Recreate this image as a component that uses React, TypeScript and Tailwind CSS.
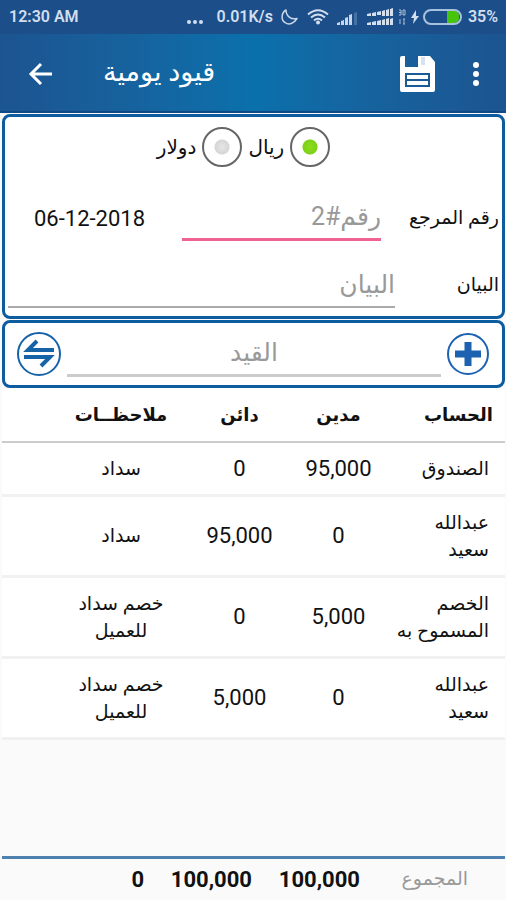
import { useState } from "react";

const entries = [
  { account: "الصندوق", debit: "95,000", credit: "0", note: "سداد", height: "h-[53px]" },
  { account: "عبدالله سعيد", debit: "0", credit: "95,000", note: "سداد", height: "h-[81px]" },
  { account: "الخصم المسموح به", debit: "5,000", credit: "0", note: "خصم سداد للعميل", height: "h-[81px]" },
  { account: "عبدالله سعيد", debit: "0", credit: "5,000", note: "خصم سداد للعميل", height: "h-[81px]" },
];

const currencies = [
  { id: "riyal", label: "ريال" },
  { id: "dollar", label: "دولار" },
];

function SignalBars() {
  return (
    <svg width="22" height="16" viewBox="0 0 22 16" fill="#c8d6ea" aria-hidden="true">
      <path d="M0 14l3-1v3H0zM4 12l3-1v5H4zM8 9l3-1v8H8zM12 6l3-1v11h-3z" />
      <path d="M17 4l3-1v13h-3z" opacity="0.25" />
    </svg>
  );
}

function DualSignal() {
  return (
    <svg width="40" height="18" viewBox="0 0 40 18" fill="#d3deef" aria-hidden="true">
      <path d="M0 6l4-1v3H0zM5 5l4-1v4H5zM10 4l4-1v4h-4zM15 3l3-1v6h-3zM19 2l3-1v7h-3zM23 1l3-1v8h-3z" />
      <path d="M0 15l4-1v3H0zM5 14l4-1v4H5zM10 13l4-1v5h-4zM15 12l3-1v6h-3zM19 11l3-1v7h-3zM23 11l3-1v7h-3z" />
      <path
        d="M32 2h2v5h-2M32 4.500h2M36 2h2v5h-2zM33 11v5M36 11h2M37 11v5M36 16h2"
        fill="none"
        stroke="#a9bedb"
        strokeWidth="1"
      />
    </svg>
  );
}

function StatusBar() {
  return (
    <div dir="ltr" className="flex h-[34px] items-center bg-[#1c4f8a] pr-2 pl-[9px] text-base font-semibold text-[#d3deef]">
      <span>12:30 AM</span>
      <div className="ml-auto flex items-center">
        <svg width="18" height="16" viewBox="0 0 18 16" fill="#d3deef" className="mr-3" aria-hidden="true">
          <circle cx="3" cy="13" r="2" />
          <circle cx="9" cy="13" r="2" />
          <circle cx="15" cy="13" r="2" />
        </svg>
        <span className="mr-2">0.01K/s</span>
        <svg width="18" height="18" viewBox="0 0 18 18" fill="none" stroke="#c8d6ea" strokeWidth="1.500" className="mr-2" aria-hidden="true">
          <path d="M5 2C0 5 0 12 4 14.500c4 3 9 1 12-4C10 12 5 8 5 2z" strokeLinejoin="round" />
        </svg>
        <svg width="22" height="16" viewBox="0 0 22 16" fill="none" stroke="#d3deef" strokeWidth="2" className="mr-2" aria-hidden="true">
          <path d="M1 5.500Q11-3 21 5.500M4 8.500Q11 2.500 18 8.500M7 11.500Q11 8 15 11.500" />
          <circle cx="11" cy="13.500" r="2" fill="#d3deef" stroke="none" />
        </svg>
        <span className="mr-2">
          <SignalBars />
        </span>
        <span className="mr-1">
          <DualSignal />
        </span>
        <svg width="8" height="14" viewBox="0 0 8 14" fill="#d3deef" className="mr-1" aria-hidden="true">
          <path d="M5 0L0 8h3l-1 6 6-8H5z" />
        </svg>
        <svg width="39" height="16" viewBox="0 0 39 16" className="mr-1.5" aria-hidden="true">
          <path d="M24 2h8a5 5 0 0 1 4 5v2a5 5 0 0 1-4 5h-8z" fill="#45c60d" />
          <rect x="1" y="1" width="37" height="14" rx="7" fill="none" stroke="#a9c0df" strokeWidth="2" />
        </svg>
        <span>35%</span>
      </div>
    </div>
  );
}

function AppBar() {
  return (
    <header
      dir="ltr"
      className="flex h-[79px] items-center border-b-2 border-[#0f4a86] bg-linear-to-r from-[#1c5490] via-[#0a70ab] to-[#1c5490] pr-[18px] pl-7"
    >
      <button type="button" aria-label="رجوع" className="mr-[50px]">
        <svg width="25" height="24" viewBox="0 0 25 24" fill="none" stroke="#fff" strokeWidth="3">
          <path d="M24 13H3M13 3L3 13l10 10" />
        </svg>
      </button>
      <h1 dir="rtl" className="text-[27px] text-white">
        قيود يومية
      </h1>
      <button type="button" aria-label="حفظ" className="mr-7 ml-auto">
        <svg width="36" height="38" viewBox="0 -2 36 38">
          <path d="M2 0h3v11h13V0h12l5 6v28a2 2 0 0 1-2 2H2a2 2 0 0 1-2-2V2a2 2 0 0 1 2-2z" fill="#fff" />
          <path d="M21 1h4v8h-4z" fill="#d6e2ee" />
          <path d="M5 17h25v14H5z" fill="#1a5a95" />
          <path d="M7 19h21v4H7zM7 25h21v4H7z" fill="#fff" />
        </svg>
      </button>
      <button type="button" aria-label="المزيد">
        <svg width="24" height="26" viewBox="0 0 24 26" fill="#fff">
          <circle cx="12" cy="5" r="3" />
          <circle cx="12" cy="14" r="3" />
          <circle cx="12" cy="23" r="3" />
        </svg>
      </button>
    </header>
  );
}

function EntryForm() {
  const [currency, setCurrency] = useState("riyal");

  return (
    <section className="rounded-lg border-3 border-[#0d5ca0] bg-white px-[3px] pt-[10px] pb-2">
      <div className="flex items-center justify-center gap-1.5 pr-5">
        {currencies.map((item) => (
          <div key={item.id} className="flex items-center gap-1.5">
            <input
              type="radio"
              id={item.id}
              name="currency"
              checked={currency === item.id}
              onChange={() => setCurrency(item.id)}
              className="size-10 appearance-none rounded-full border-2 border-[#666] bg-[radial-gradient(circle,#e6e6e6_0,#d6d6d6_7px,transparent_8px)] checked:bg-[radial-gradient(circle,#8ade1c_0,#7fd016_7px,transparent_8px)]"
            />
            <label htmlFor={item.id} className="text-xl">
              {item.label}
            </label>
          </div>
        ))}
      </div>

      <div className="mt-7 flex items-center">
        <label htmlFor="reference" className="w-[118px] shrink-0 text-[19px]">
          رقم المرجع
        </label>
        <input
          id="reference"
          placeholder="رقم#2"
          className="h-[46px] min-w-0 flex-1 border-b-3 border-[#f06292] text-[25px] outline-none placeholder:text-[#999]"
        />
        <time dateTime="2018-12-06" dir="ltr" className="w-[174px] shrink-0 pl-[26px] text-[22px]">
          06-12-2018
        </time>
      </div>

      <div className="mt-[21px] flex items-center">
        <label htmlFor="statement" className="w-[104px] shrink-0 text-[19px]">
          البيان
        </label>
        <input
          id="statement"
          placeholder="البيان"
          className="h-[46px] min-w-0 flex-1 border-b-2 border-[#aaa] text-[25px] outline-none placeholder:text-[#999]"
        />
      </div>
    </section>
  );
}

function EntryBar() {
  return (
    <section className="mt-px flex h-[68px] items-center gap-1 rounded-lg border-3 border-[#0d5ca0] bg-white px-3">
      <button type="button" aria-label="إضافة" className="mr-px">
        <svg width="44" height="44" viewBox="0 0 44 44" fill="none" stroke="#1c62b0">
          <circle cx="23" cy="22" r="20" strokeWidth="2" />
          <path d="M23 10v24M10 22h26" strokeWidth="7" />
        </svg>
      </button>
      <input
        aria-label="القيد"
        placeholder="القيد"
        className="h-[46px] min-w-0 flex-1 border-b-3 border-[#ccc] text-center text-[25px] outline-none placeholder:text-[#999]"
      />
      <button type="button" aria-label="تبديل">
        <svg width="46" height="46" viewBox="0 0 46 46" fill="none" stroke="#1763a8">
          <circle cx="22" cy="23" r="21" strokeWidth="2" />
          <path d="M37 19H11L20 10M7 26h26L24 35" strokeWidth="4" />
        </svg>
      </button>
    </section>
  );
}

function EntriesTable() {
  return (
    <table className="w-full table-fixed bg-white">
      <colgroup>
        <col className="w-[117px]" />
        <col className="w-[99px]" />
        <col className="w-[99px]" />
        <col />
      </colgroup>
      <thead>
        <tr className="h-[54px] border-b-2 border-[#ccc] text-lg">
          <th className="pr-3 text-right font-bold">الحساب</th>
          <th className="font-bold">مدين</th>
          <th className="font-bold">دائن</th>
          <th className="pr-5 pl-[70px] font-bold whitespace-nowrap">ملاحظــات</th>
        </tr>
      </thead>
      <tbody>
        {entries.map((entry, index) => (
          <tr key={index} className={`${entry.height} border-b-3 border-[#f1f1f1]`}>
            <td className="pr-4 pl-1 text-right text-[19px] leading-[27px]">{entry.account}</td>
            <td className="text-center text-[22px]">{entry.debit}</td>
            <td className="text-center text-[22px]">{entry.credit}</td>
            <td className="pr-5 pl-[70px] text-center text-[19px] leading-[27px]">{entry.note}</td>
          </tr>
        ))}
      </tbody>
    </table>
  );
}

export default function App() {
  return (
    <div
      dir="rtl"
      className="flex min-h-screen flex-col bg-[#fafafa] font-['Roboto','DejaVu_Sans',sans-serif] text-[#111]"
    >
      <StatusBar />
      <AppBar />
      <main className="flex flex-1 flex-col px-px pt-px pl-0.5">
        <EntryForm />
        <EntryBar />
        <EntriesTable />
        <footer className="mt-auto flex h-[44px] items-center border-t-3 border-[#4f81b0] pr-[37px] text-[22px] font-bold">
          <span className="w-[108px] text-[19px] font-normal text-[#999]">المجموع</span>
          <span className="w-[108px]">100,000</span>
          <span className="w-[108px]">100,000</span>
          <span>0</span>
        </footer>
      </main>
    </div>
  );
}
